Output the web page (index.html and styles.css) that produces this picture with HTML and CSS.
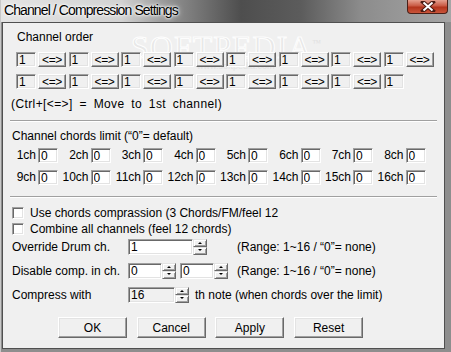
FILE: index.html
```html
<!DOCTYPE html>
<html lang="en">
<head>
    <meta charset="UTF-8">
    <title>Channel / Compression Settings</title>
    <link rel="stylesheet" href="styles.css">
</head>
<body>
    <div class="window">
        <div class="titlebar">
            <span class="title">Channel / Compression Settings</span>
            <div class="close">
                <svg width="16" height="11" viewBox="0 0 16 11">
                    <path d="M3 1 L13 10 M13 1 L3 10" stroke="#4a1a12" stroke-width="4" stroke-linecap="square"/>
                    <path d="M3.5 1.5 L12.5 9.5 M12.5 1.5 L3.5 9.5" stroke="#fff" stroke-width="2"/>
                </svg>
            </div>
        </div>

        <div class="client">
            <div class="watermark">SOFTPEDIA<sup>™</sup><span class="wm-url">www.softpedia.com</span></div>

            <div class="caption caption-order">Channel order</div>
            <div class="order-row">
                <div class="order-cell"><input class="edit ro" value="1" readonly><button class="btn swap">&lt;=&gt;</button></div>
                <div class="order-cell"><input class="edit ro" value="1" readonly><button class="btn swap">&lt;=&gt;</button></div>
                <div class="order-cell"><input class="edit ro" value="1" readonly><button class="btn swap">&lt;=&gt;</button></div>
                <div class="order-cell"><input class="edit ro" value="1" readonly><button class="btn swap">&lt;=&gt;</button></div>
                <div class="order-cell"><input class="edit ro" value="1" readonly><button class="btn swap">&lt;=&gt;</button></div>
                <div class="order-cell"><input class="edit ro" value="1" readonly><button class="btn swap">&lt;=&gt;</button></div>
                <div class="order-cell"><input class="edit ro" value="1" readonly><button class="btn swap">&lt;=&gt;</button></div>
                <div class="order-cell"><input class="edit ro" value="1" readonly><button class="btn swap">&lt;=&gt;</button></div>
            </div>
            <div class="order-row row-2">
                <div class="order-cell"><input class="edit ro" value="1" readonly><button class="btn swap">&lt;=&gt;</button></div>
                <div class="order-cell"><input class="edit ro" value="1" readonly><button class="btn swap">&lt;=&gt;</button></div>
                <div class="order-cell"><input class="edit ro" value="1" readonly><button class="btn swap">&lt;=&gt;</button></div>
                <div class="order-cell"><input class="edit ro" value="1" readonly><button class="btn swap">&lt;=&gt;</button></div>
                <div class="order-cell"><input class="edit ro" value="1" readonly><button class="btn swap">&lt;=&gt;</button></div>
                <div class="order-cell"><input class="edit ro" value="1" readonly><button class="btn swap">&lt;=&gt;</button></div>
                <div class="order-cell"><input class="edit ro" value="1" readonly><button class="btn swap">&lt;=&gt;</button></div>
                <div class="order-cell"><input class="edit ro" value="1" readonly></div>
            </div>
            <div class="note">(Ctrl+[&lt;=&gt;] = Move to 1st channel)</div>

            <div class="sep sep-1"></div>

            <div class="caption caption-limit">Channel chords limit (“0”= default)</div>
            <div class="chord-row">
                <div class="chord-cell"><label>1ch</label><input class="edit" value="0"></div>
                <div class="chord-cell"><label>2ch</label><input class="edit" value="0"></div>
                <div class="chord-cell"><label>3ch</label><input class="edit" value="0"></div>
                <div class="chord-cell"><label>4ch</label><input class="edit" value="0"></div>
                <div class="chord-cell"><label>5ch</label><input class="edit" value="0"></div>
                <div class="chord-cell"><label>6ch</label><input class="edit" value="0"></div>
                <div class="chord-cell"><label>7ch</label><input class="edit" value="0"></div>
                <div class="chord-cell"><label>8ch</label><input class="edit" value="0"></div>
            </div>
            <div class="chord-row row-2">
                <div class="chord-cell"><label>9ch</label><input class="edit" value="0"></div>
                <div class="chord-cell"><label>10ch</label><input class="edit" value="0"></div>
                <div class="chord-cell"><label>11ch</label><input class="edit" value="0"></div>
                <div class="chord-cell"><label>12ch</label><input class="edit" value="0"></div>
                <div class="chord-cell"><label>13ch</label><input class="edit" value="0"></div>
                <div class="chord-cell"><label>14ch</label><input class="edit" value="0"></div>
                <div class="chord-cell"><label>15ch</label><input class="edit" value="0"></div>
                <div class="chord-cell"><label>16ch</label><input class="edit" value="0"></div>
            </div>

            <div class="sep sep-2"></div>

            <div class="check check-1"><span class="box"></span>Use chords comprassion (3 Chords/FM/feel 12</div>
            <div class="check check-2"><span class="box"></span>Combine all channels (feel 12 chords)</div>

            <div class="spin-row spin-row-1">
                <span class="spin-label">Override Drum ch.</span>
                <div class="spin spin-wide"><input class="edit" value="1"><div class="arrows"><span class="up"></span><span class="down"></span></div></div>
                <span class="range">(Range: 1~16 / “0”= none)</span>
            </div>
            <div class="spin-row">
                <span class="spin-label">Disable comp. in ch.</span>
                <div class="spin"><input class="edit" value="0"><div class="arrows"><span class="up"></span><span class="down"></span></div></div>
                <div class="spin spin-second"><input class="edit" value="0"><div class="arrows"><span class="up"></span><span class="down"></span></div></div>
                <span class="range">(Range: 1~16 / “0”= none)</span>
            </div>
            <div class="spin-row">
                <span class="spin-label">Compress with</span>
                <div class="spin spin-mid"><input class="edit ro" value="16"><div class="arrows"><span class="up"></span><span class="down"></span></div></div>
                <span class="suffix">th note (when chords over the limit)</span>
            </div>

            <div class="actions">
                <button class="btn action">OK</button>
                <button class="btn action">Cancel</button>
                <button class="btn action">Apply</button>
                <button class="btn action">Reset</button>
            </div>
        </div>
    </div>
</body>
</html>
```

FILE: styles.css
```css
body {
    margin: 0;
    background: #fff;
    font-family: "Liberation Sans", Arial, sans-serif;
    font-size: 12px;
    color: #000;
}
.window {
    width: 451px;
    height: 352px;
    background: #8e8e8e;
    box-sizing: border-box;
    border-left: 1px solid #c8c8c8;
    position: relative;
    overflow: hidden;
}
.titlebar {
    height: 22px;
    display: flex;
    align-items: flex-start;
    background: linear-gradient(to right, #e4e4e4 0, #d2d2d2 120px, #8a8a8a 175px, #4e4e4e 240px, #5c5c5c 300px, #8c8c8c 360px, #a6a6a6 451px);
}
.title {
    font-family: "Liberation Sans", sans-serif;
    font-size: 14px;
    letter-spacing: -0.9px;
    line-height: 18px;
    margin: 1px 0 0 3px;
    color: #000;
    text-shadow: 0 0 6px #fff, 0 0 3px #fff, 0 0 2px #fff;
}
.close {
    margin-left: auto;
    margin-right: 3px;
    width: 41px;
    height: 14px;
    box-sizing: border-box;
    border: 1px solid #4a2018;
    border-top: none;
    border-radius: 0 0 4px 4px;
    background: linear-gradient(#e5a08f, #c95a44 45%, #b3341c 55%, #c9543a);
    display: flex;
    justify-content: center;
    align-items: center;
}
.client {
    position: relative;
    margin-left: 1px;
    width: 443px;
    height: 327px;
    box-sizing: border-box;
    border: 1px solid #505050;
    background: #f0f0f0;
    display: flex;
    flex-direction: column;
}
.watermark {
    position: absolute;
    left: 128px;
    top: 6px;
    font-family: "Liberation Serif", serif;
    font-size: 32px;
    letter-spacing: 1px;
    color: rgba(0, 0, 0, 0.03);
    -webkit-text-stroke: 1px rgba(255, 255, 255, 0.9);
    pointer-events: none;
}
.watermark sup {
    font-size: 9px;
    -webkit-text-stroke: 0;
    color: #e0e0e0;
}
.wm-url {
    position: absolute;
    left: 66px;
    top: 32px;
    font-family: "Liberation Sans", sans-serif;
    font-size: 9px;
    letter-spacing: 0;
    -webkit-text-stroke: 0;
    color: #e2e2e2;
}
.caption, .note {
    height: 14px;
    line-height: 14px;
    white-space: nowrap;
    position: relative;
}
.caption-order {
    margin-top: 7px;
    padding-left: 14px;
}
.order-row {
    display: flex;
    margin-top: 8px;
    padding-left: 13px;
    height: 15px;
    position: relative;
}
.order-row.row-2 {
    margin-top: 7px;
}
.order-cell {
    width: 52.5px;
    display: flex;
    flex: none;
}
.edit {
    -webkit-appearance: none;
    appearance: none;
    width: 20px;
    height: 15px;
    margin: 0;
    padding: 0 0 0 2px;
    box-sizing: border-box;
    font-family: "Liberation Sans", Arial, sans-serif;
    font-size: 12px;
    line-height: 13px;
    color: #000;
    background: #fff;
    border: 1px solid;
    border-color: #a0a0a0 #fff #fff #a0a0a0;
    box-shadow: inset 1px 1px 0 #696969, inset -1px -1px 0 #e3e3e3;
    outline: none;
}
.edit.ro {
    background: #f0f0f0;
}
.btn {
    -webkit-appearance: none;
    appearance: none;
    margin: 0;
    padding: 0;
    box-sizing: border-box;
    font-family: "Liberation Sans", Arial, sans-serif;
    font-size: 12px;
    color: #000;
    background: #f0f0f0;
    border: 1px solid;
    border-color: #fff #696969 #696969 #fff;
    box-shadow: inset -1px -1px 0 #a0a0a0, inset 1px 1px 0 #e3e3e3;
}
.swap {
    width: 28px;
    height: 15px;
    margin-left: 2px;
    font-size: 12px;
    letter-spacing: -0.3px;
    line-height: 12px;
}
.note {
    margin-top: 8px;
    padding-left: 8px;
    letter-spacing: 0.4px;
    word-spacing: 3px;
}
.sep {
    height: 0;
    margin-left: 7px;
    width: 427px;
    border-top: 1px solid #a0a0a0;
    border-bottom: 1px solid #fff;
}
.sep-1 {
    margin-top: 9px;
}
.caption-limit {
    margin-top: 7px;
    padding-left: 9px;
}
.chord-row {
    display: flex;
    margin-top: 5px;
    padding-left: 2.5px;
    height: 15px;
}
.chord-row.row-2 {
    margin-top: 7px;
}
.chord-cell {
    width: 52.5px;
    flex: none;
    display: flex;
    justify-content: flex-end;
    align-items: center;
}
.chord-cell label {
    margin-right: 2px;
    line-height: 15px;
}
.sep-2 {
    margin-top: 11px;
}
.check {
    display: flex;
    align-items: center;
    height: 13px;
    padding-left: 9px;
    white-space: nowrap;
}
.check-1 {
    margin-top: 8px;
}
.check-2 {
    margin-top: 3px;
}
.box {
    width: 12px;
    height: 12px;
    box-sizing: border-box;
    margin-right: 6px;
    background: #fff;
    border: 1px solid;
    border-color: #a0a0a0 #fff #fff #a0a0a0;
    box-shadow: inset 1px 1px 0 #696969, inset -1px -1px 0 #e3e3e3;
}
.spin-row {
    display: flex;
    align-items: center;
    height: 16px;
    margin-top: 8px;
    padding-left: 9px;
    white-space: nowrap;
}
.spin-row-1 {
    margin-top: 4px;
}
.spin-label {
    width: 116px;
    flex: none;
}
.spin {
    display: flex;
    height: 16px;
}
.spin .edit {
    width: 34px;
    height: 16px;
}
.spin-wide .edit {
    width: 65px;
}
.spin-mid .edit {
    width: 47px;
}
.spin-second {
    margin-left: 4px;
}
.arrows {
    width: 14px;
    height: 16px;
    display: flex;
    flex-direction: column;
}
.arrows span {
    height: 8px;
    box-sizing: border-box;
    background: #f0f0f0;
    border: 1px solid;
    border-color: #e3e3e3 #696969 #696969 #e3e3e3;
    box-shadow: inset 1px 1px 0 #fff, inset -1px -1px 0 #a0a0a0;
    position: relative;
}
.arrows span::after {
    content: "";
    position: absolute;
    left: 4px;
    top: 2px;
    border-left: 2px solid transparent;
    border-right: 2px solid transparent;
}
.arrows .up::after {
    border-bottom: 2px solid #000;
}
.arrows .down::after {
    top: 1px;
    border-top: 2px solid #000;
}
.range {
    margin-left: 30px;
}
.spin-row .spin-second + .range {
    margin-left: 9px;
}
.suffix {
    margin-left: 6px;
}
.actions {
    display: flex;
    gap: 9.7px;
    margin-top: 14px;
    padding-left: 55px;
}
.action {
    width: 69px;
    height: 21px;
}
```
